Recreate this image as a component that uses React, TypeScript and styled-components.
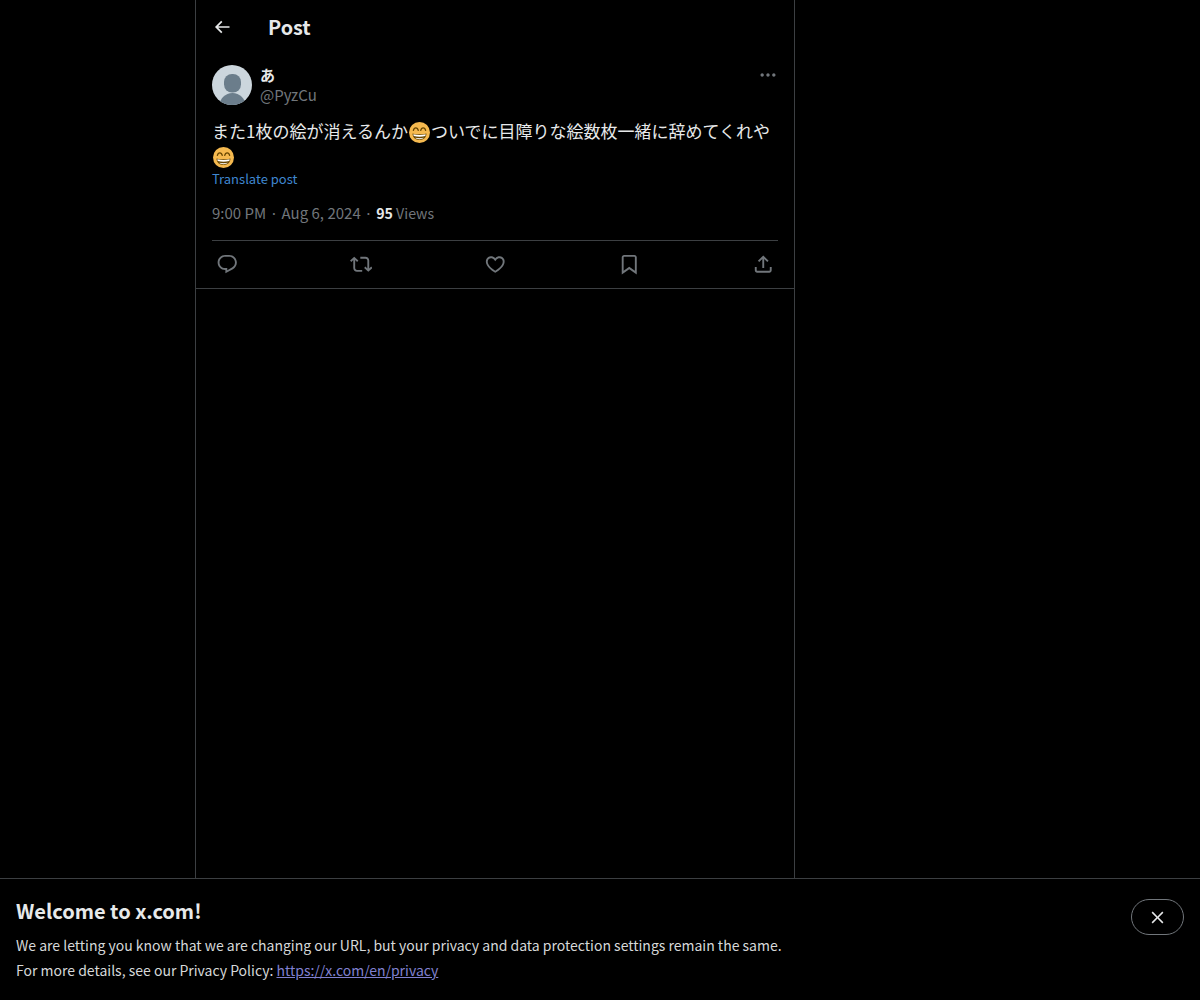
import React from "react";
import styled, { createGlobalStyle } from "styled-components";

const GlobalStyle = createGlobalStyle`
  html, body { margin: 0; padding: 0; background: #000; }
  body { font-family: "Noto Sans CJK JP", "Noto Sans", sans-serif; }
`;

const Page = styled.div`
  display: flex;
  flex-direction: column;
  height: 1000px;
  overflow: hidden;
  background: #000;
  color: #e7e9ea;
`;

const Column = styled.main`
  flex: 1;
  box-sizing: border-box;
  width: 600px;
  margin-left: 195px;
  border-left: 1px solid #3c3f42;
  border-right: 1px solid #3c3f42;
`;

const Header = styled.header`
  display: flex;
  align-items: center;
  height: 53px;
  padding: 0 16px;
`;

const BackButton = styled.button`
  display: flex;
  align-items: center;
  justify-content: center;
  width: 20px;
  height: 20px;
  margin-right: 36px;
  padding: 0;
  border: 0;
  background: none;
  color: #e7e9ea;
`;

const Title = styled.h1`
  margin: 0;
  font-size: 19.8px;
  font-weight: 700;
  line-height: 24px;
  color: #e7e9ea;
`;

const Tweet = styled.article`
  padding: 12px 16px 0;
  border-bottom: 1px solid #3c3f42;
`;

const Author = styled.div`
  display: flex;
  align-items: flex-start;
  gap: 8px;
  height: 40px;
`;

const Avatar = styled.svg`
  width: 40px;
  height: 40px;
  border-radius: 50%;
  flex: none;
`;

const Names = styled.div`
  flex: 1;
  display: flex;
  flex-direction: column;
`;

const DisplayName = styled.div`
  font-size: 15px;
  font-weight: 700;
  line-height: 20px;
`;

const Handle = styled.div`
  font-size: 15px;
  line-height: 20px;
  color: #71767b;
`;

const MoreIcon = styled.svg`
  width: 20px;
  height: 20px;
  fill: #71767b;
`;

const Body = styled.div`
  margin-top: 13px;
  font-size: 17px;
  line-height: 25px;
  color: #e7e9ea;
`;

const Emoji = styled.svg`
  display: inline-block;
  width: 21px;
  height: 21px;
  margin: 0 1px;
  vertical-align: -0.28em;
`;

const Translate = styled.a`
  display: block;
  margin-top: 3px;
  font-size: 13px;
  line-height: 16px;
  color: #3f87d0;
`;

const Meta = styled.div`
  display: flex;
  align-items: baseline;
  gap: 3.5px;
  margin-top: 16px;
  height: 20px;
  padding-bottom: 17px;
  border-bottom: 1px solid #3c3f42;
  font-size: 15px;
  line-height: 20px;
  color: #71767b;
`;

const Views = styled.span`
  font-size: 14.2px;
`;

const Strong = styled.b`
  color: #e7e9ea;
  font-weight: 700;
`;

const Actions = styled.div`
  display: flex;
  justify-content: space-between;
  align-items: center;
  box-sizing: border-box;
  height: 47px;
  padding-bottom: 1px;
`;

const Action = styled.button`
  display: flex;
  align-items: center;
  justify-content: center;
  width: 30px;
  height: 30px;
  padding: 0;
  border: 0;
  background: none;
  color: #71767b;
`;

const ActionIcon = styled.svg`
  width: 22.5px;
  height: 22.5px;
  fill: currentColor;
`;

const Banner = styled.footer`
  display: flex;
  justify-content: space-between;
  align-items: flex-start;
  box-sizing: border-box;
  height: 122px;
  padding: 20px 16px 0;
  border-top: 1px solid #3c3f42;
  background: #000;
`;

const BannerTitle = styled.h2`
  margin: 0 0 10px;
  font-size: 20px;
  font-weight: 700;
  line-height: 24px;
  color: #e7e9ea;
`;

const BannerText = styled.p`
  margin: 0;
  font-size: 14px;
  line-height: 25px;
  color: #d6d8d9;
`;

const PolicyLink = styled.a`
  color: #8080d0;
  text-decoration: underline;
`;

const CloseButton = styled.button`
  display: flex;
  align-items: center;
  justify-content: center;
  box-sizing: border-box;
  width: 53px;
  height: 36px;
  padding: 0;
  border: 1px solid #71767b;
  border-radius: 18px;
  background: none;
  color: #e7e9ea;
`;

const CloseIcon = styled.svg`
  width: 19px;
  height: 19px;
  fill: currentColor;
`;

const GrinEmoji = () => (
  <Emoji viewBox="0 0 36 36">
    <circle cx="18" cy="18" r="18" fill="#f5b94f" />
    <path d="M6 19.500c3.500 1 7.500 1.500 12 1.500s8.500-.5 12-1.500c0 6.500-5 11-12 11s-12-4.500-12-11z" fill="#664500" />
    <path d="M7.500 21c3 .8 6.500 1.200 10.500 1.200s7.500-.4 10.500-1.200c0 1.400-.2 2.300-.6 3.200-3 .7-6.200 1-9.900 1s-6.900-.3-9.900-1c-.4-.9-.6-1.800-.6-3.200z" fill="#fff" />
    <path d="M10.500 27c2.200.5 4.600.7 7.500.7s5.300-.2 7.500-.7c-1.800 1.700-4.400 2.500-7.500 2.500s-5.700-.8-7.500-2.500z" fill="#fff" />
    <path d="M7.500 14.500c.7-3 2.300-4.500 4.200-4.500s3.500 1.500 4.200 4.500M20.100 14.500c.7-3 2.300-4.500 4.200-4.500s3.500 1.500 4.200 4.500" fill="none" stroke="#664500" strokeWidth="2.200" strokeLinecap="round" />
  </Emoji>
);

const actionPaths = [
  "M1.751 10c0-4.420 3.584-8 8.005-8h4.366c4.490 0 8.129 3.640 8.129 8.130 0 2.960-1.607 5.680-4.196 7.110l-8.054 4.460v-3.690h-.067c-4.490.1-8.183-3.510-8.183-8.010zm8.005-6c-3.317 0-6.005 2.690-6.005 6 0 3.370 2.770 6.080 6.138 6.010l.351-.01h1.761v2.300l5.087-2.810c1.951-1.080 3.163-3.130 3.163-5.360 0-3.390-2.744-6.130-6.129-6.130H9.756z",
  "M4.500 3.880l4.432 4.140-1.364 1.460L5.500 7.550V16c0 1.100.896 2 2 2H13v2H7.500c-2.209 0-4-1.790-4-4V7.550L1.432 9.480.068 8.020 4.500 3.880zM16.500 6H11V4h5.500c2.209 0 4 1.790 4 4v8.450l2.068-1.930 1.364 1.460-4.432 4.140-4.432-4.140 1.364-1.460 2.068 1.930V8c0-1.100-.896-2-2-2z",
  "M16.697 5.500c-1.222-.06-2.679.51-3.890 2.160l-.805 1.090-.806-1.090C9.984 6.010 8.526 5.440 7.304 5.500c-1.243.07-2.349.78-2.910 1.910-.552 1.120-.633 2.780.479 4.820 1.074 1.970 3.257 4.270 7.129 6.610 3.870-2.340 6.052-4.640 7.126-6.610 1.111-2.040 1.030-3.700.477-4.820-.561-1.130-1.666-1.840-2.908-1.910zm4.187 7.690c-1.351 2.480-4.001 5.120-8.379 7.670l-.503.3-.504-.3c-4.379-2.550-7.029-5.190-8.382-7.670-1.360-2.500-1.410-4.860-.514-6.670.887-1.790 2.647-2.910 4.601-3.010 1.651-.09 3.368.56 4.798 2.010 1.429-1.450 3.146-2.100 4.796-2.010 1.954.1 3.714 1.220 4.601 3.010.896 1.810.846 4.170-.514 6.670z",
  "M4 4.500C4 3.120 5.119 2 6.500 2h11C18.881 2 20 3.120 20 4.500v18.440l-8-5.710-8 5.710V4.500zM6.500 4c-.276 0-.5.220-.5.500v14.560l6-4.290 6 4.290V4.500c0-.280-.224-.5-.5-.5h-11z",
  "M12 2.590l5.700 5.700-1.410 1.420L13 6.410V16h-2V6.410l-3.300 3.300-1.410-1.420L12 2.590zM21 15l-.02 3.510c0 1.380-1.120 2.490-2.500 2.490H5.500C4.110 21 3 19.880 3 18.500V15h2v3.500c0 .280.220.5.500.5h12.980c.280 0 .5-.220.5-.5L19 15h2z",
];

export default function App() {
  return (
    <Page>
      <GlobalStyle />
      <Column>
        <Header>
          <BackButton aria-label="Back">
            <svg viewBox="0 0 24 24" width="20" height="20" fill="currentColor">
              <path d="M7.414 13l5.043 5.040-1.414 1.420L3.586 12l7.457-7.460 1.414 1.420L7.414 11H21v2H7.414z" />
            </svg>
          </BackButton>
          <Title>Post</Title>
        </Header>
        <Tweet>
          <Author>
            <Avatar viewBox="0 0 40 40">
              <rect width="40" height="40" fill="#ccd6dd" />
              <rect x="12" y="9" width="17" height="18.500" rx="8" fill="#6b7d8b" />
              <ellipse cx="20.500" cy="41" rx="13" ry="13" fill="#6b7d8b" />
            </Avatar>
            <Names>
              <DisplayName>あ</DisplayName>
              <Handle>@PyzCu</Handle>
            </Names>
            <MoreIcon viewBox="0 0 24 24">
              <path d="M3 12c0-1.100.9-2 2-2s2 .9 2 2-.9 2-2 2-2-.9-2-2zm9 2c1.100 0 2-.9 2-2s-.9-2-2-2-2 .9-2 2 .9 2 2 2zm7 0c1.100 0 2-.9 2-2s-.9-2-2-2-2 .9-2 2 .9 2 2 2z" />
            </MoreIcon>
          </Author>
          <Body>
            また1枚の絵が消えるんか<GrinEmoji />ついでに目障りな絵数枚一緒に辞めてくれや<GrinEmoji />
          </Body>
          <Translate>Translate post</Translate>
          <Meta>
            <span>9:00 PM</span>
            <span>·</span>
            <span>Aug 6, 2024</span>
            <span>·</span>
            <Views>
              <Strong>95</Strong> Views
            </Views>
          </Meta>
          <Actions>
            {actionPaths.map((d) => (
              <Action key={d}>
                <ActionIcon viewBox="0 0 24 24">
                  <path d={d} />
                </ActionIcon>
              </Action>
            ))}
          </Actions>
        </Tweet>
      </Column>
      <Banner>
        <div>
          <BannerTitle>Welcome to x.com!</BannerTitle>
          <BannerText>We are letting you know that we are changing our URL, but your privacy and data protection settings remain the same.</BannerText>
          <BannerText>
            For more details, see our Privacy Policy: <PolicyLink href="#">https://x.com/en/privacy</PolicyLink>
          </BannerText>
        </div>
        <CloseButton aria-label="Close">
          <CloseIcon viewBox="0 0 24 24">
            <path d="M10.590 12L4.540 5.960l1.420-1.420L12 10.590l6.040-6.050 1.420 1.420L13.410 12l6.050 6.040-1.420 1.420L12 13.410l-6.040 6.050-1.420-1.420L10.590 12z" />
          </CloseIcon>
        </CloseButton>
      </Banner>
    </Page>
  );
}
